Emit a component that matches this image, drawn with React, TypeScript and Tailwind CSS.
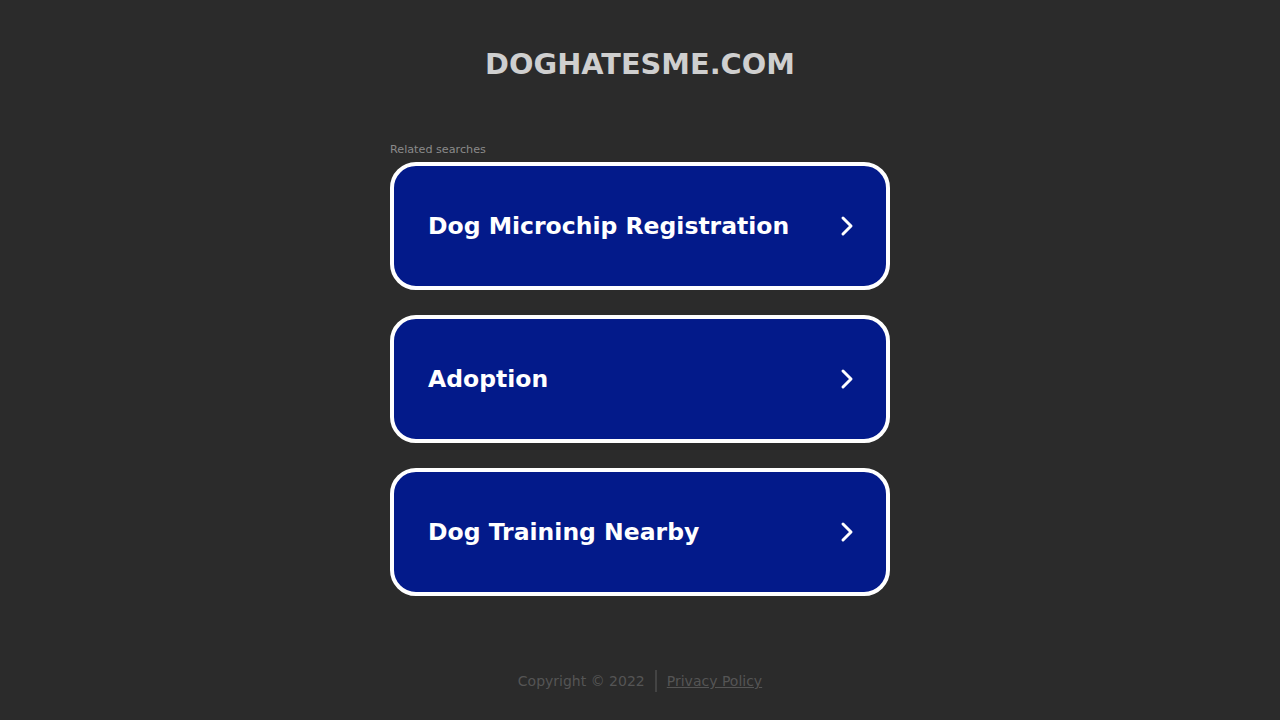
const links = ["Dog Microchip Registration", "Adoption", "Dog Training Nearby"]

function Chevron() {
  return (
    <svg width="18" height="22" viewBox="0 0 18 22" fill="none" className="shrink-0">
      <path d="M5 3l8 8-8 8" stroke="white" strokeWidth="3" strokeLinecap="round" strokeLinejoin="round" />
    </svg>
  )
}

export default function App() {
  return (
    <div
      className="w-full min-h-[720px] bg-[#2b2b2b] flex flex-col items-center"
      style={{ fontFamily: '"DejaVu Sans", Verdana, sans-serif' }}
    >
      <div className="mt-[48px] text-[28.8px] leading-[32px] font-bold text-[#cfcfcf]">DOGHATESME.COM</div>

      <div className="mt-[63px] w-[500px]">
        <div className="text-[11.2px] leading-[14px] text-[#8a8a8a]">Related searches</div>
        <div className="mt-[5px] flex flex-col gap-[25px]">
          {links.map((x) => (
            <a
              key={x}
              href="#"
              className="h-[128px] rounded-[26px] border-4 border-white bg-[#031a8a] flex items-center justify-between pl-[34px] pr-[30px]"
            >
              <span className="text-[23.5px] leading-[30px] font-bold text-white">{x}</span>
              <Chevron />
            </a>
          ))}
        </div>
      </div>

      <div className="mt-[74px] flex items-center text-[14px] leading-[18px] text-[#555]">
        <span>Copyright © 2022</span>
        <span className="mx-[10px] w-[2px] h-[22px] bg-[#444]" />
        <a href="#" className="underline">Privacy Policy</a>
      </div>
    </div>
  )
}
